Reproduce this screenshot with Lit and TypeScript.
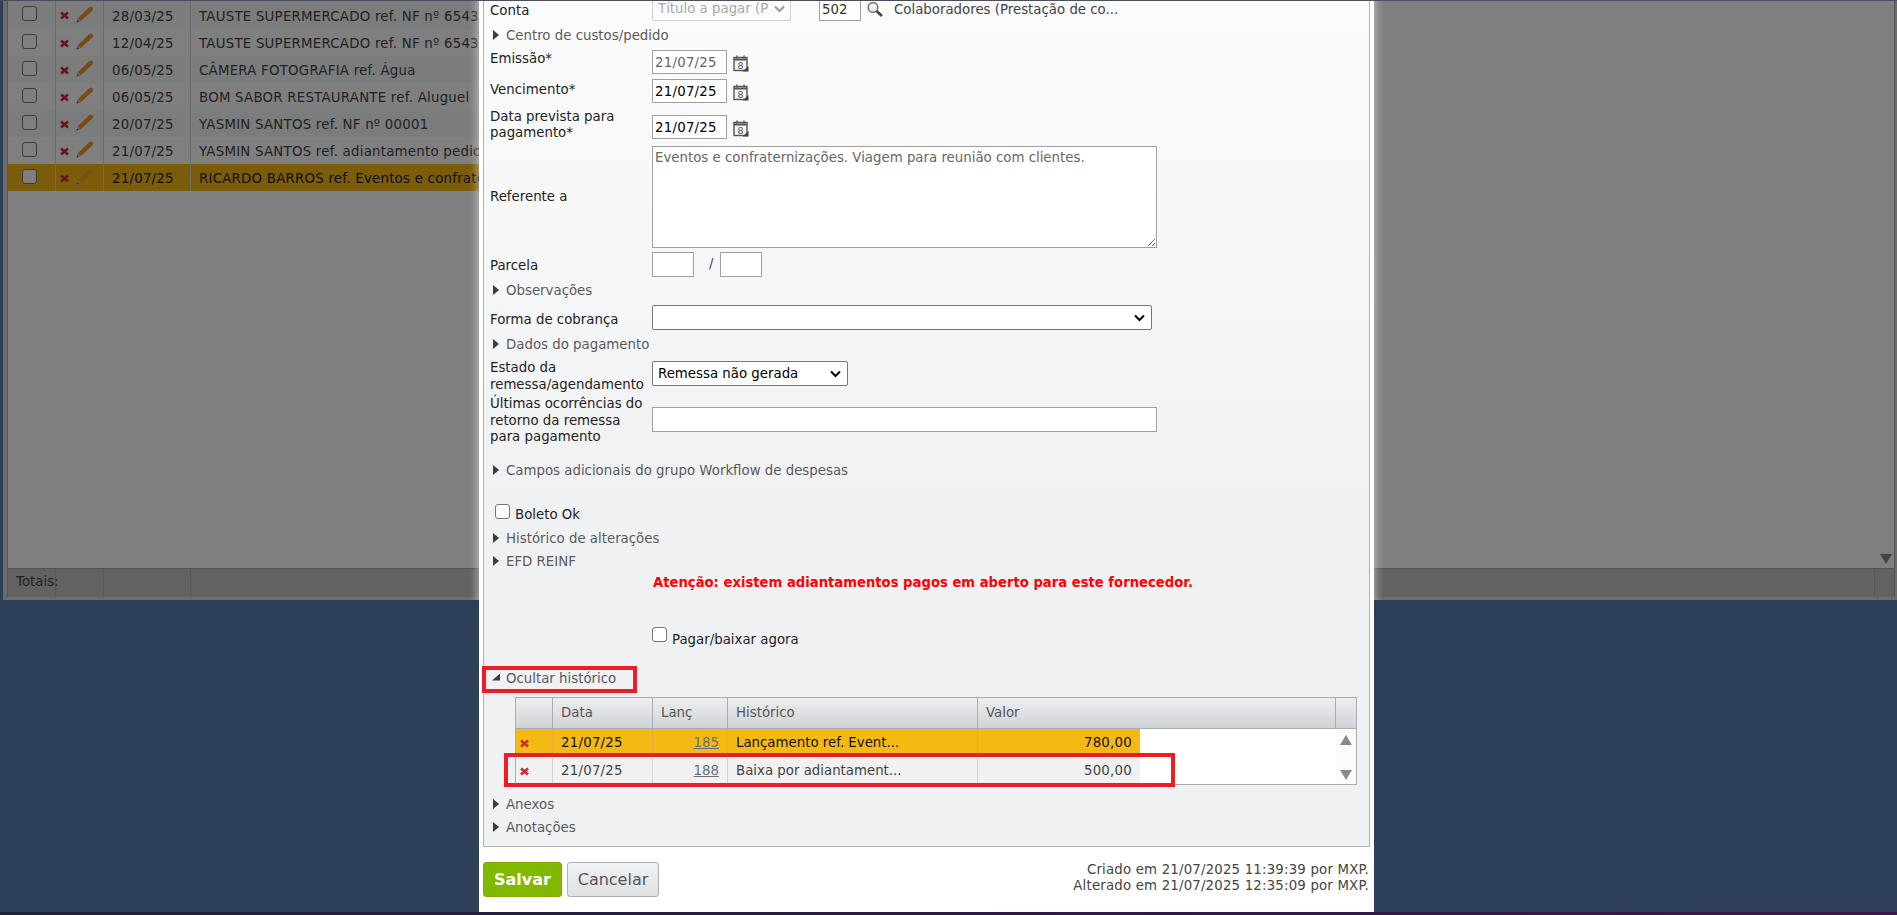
import { LitElement, html, css, svg } from "lit";
import { customElement } from "lit/decorators.js";

const ROWS = [
  ["28/03/25", "TAUSTE SUPERMERCADO ref. NF nº 6543"],
  ["12/04/25", "TAUSTE SUPERMERCADO ref. NF nº 6543"],
  ["06/05/25", "CÂMERA FOTOGRAFIA ref. Água"],
  ["06/05/25", "BOM SABOR RESTAURANTE ref. Aluguel"],
  ["20/07/25", "YASMIN SANTOS ref. NF nº 00001"],
  ["21/07/25", "YASMIN SANTOS ref. adiantamento pedido"],
  ["21/07/25", "RICARDO BARROS ref. Eventos e confraternizações"],
];

const xIcon = svg`<svg class="xi" viewBox="0 0 9 9" width="9" height="9"><path d="M1 1.5 L8 7.5 M8 1.5 L1 7.5" stroke="#d42a30" stroke-width="2.6" fill="none"/></svg>`;
const pencil = svg`<svg class="pen" viewBox="0 0 18 17" width="18" height="17"><path d="M0.5 16.5 L2 12 L13.5 1 Q15 0 16.5 1.2 Q17.8 2.8 16.6 4.2 L5 15 Z" fill="#f0962c"/><path d="M0.5 16.5 L2 12 L5 15 Z" fill="#d9c6a8"/><path d="M0.5 16.5 L1.2 14.4 L2.6 15.8 Z" fill="#444"/></svg>`;
const cal = svg`<svg class="cal" viewBox="0 0 16 17" width="16" height="17"><rect x="1" y="2.5" width="13" height="13" fill="#f4f4f4" stroke="#555" stroke-width="1.4"/><path d="M1 4.5 H14" stroke="#555" stroke-width="2"/><path d="M4 0.5 V3.5 M11 0.5 V3.5" stroke="#555" stroke-width="1.4"/><path d="M15.5 11 V16.5 H9.5 Z" fill="#444"/><text x="7.5" y="14" text-anchor="middle" font-family="DejaVu Sans" font-size="9.5" fill="#555">8</text></svg>`;
const lens = svg`<svg viewBox="0 0 16 15" width="16" height="15"><circle cx="6" cy="5.5" r="4.8" fill="#eef2f4" stroke="#777" stroke-width="1.6"/><path d="M9.5 9 L15 14" stroke="#444" stroke-width="2.6"/></svg>`;

@customElement("app-root")
export class AppRoot extends LitElement {
  static styles = css`
    :host {
      display: flex;
      flex-direction: column;
      position: relative;
      width: 1897px;
      height: 915px;
      overflow: hidden;
      background: #2e4059;
      font-family: "DejaVu Sans", Verdana, sans-serif;
      font-size: 13.33px;
      line-height: 16px;
      color: #222;
    }
    * { box-sizing: border-box; }
    .topline { height: 1px; background: #4b4f5b; flex: none; position: relative; z-index: 5; }
    .strip {
      position: absolute; left: 0; right: 0; bottom: 0; height: 3px;
      background: linear-gradient(90deg, #1d2238, #2c1c40 50%, #3a1a48);
      z-index: 5;
    }
    .sp { letter-spacing: .24px; }

    /* background list */
    .panel {
      position: relative; flex: none;
      margin-left: 3px; height: 599px;
      padding: 0 2px 3px 4px;
      background: #d8d8d8;
      overflow: hidden;
      display: flex;
    }
    .inner {
      flex: 1; display: flex; flex-direction: column; position: relative;
      background: #fff;
      border-left: 1px solid #a8a8a8;
      border-right: 1px solid #a8a8a8;
    }
    .list { flex: 1; width: 472px; overflow: hidden; }
    .lrow {
      display: grid; grid-template-columns: 48px 48px 87px 1fr;
      height: 27px; white-space: nowrap; color: #444;
      background: #fff;
      letter-spacing: .24px;
    }
    .lrow:first-child { height: 28px; }
    .lrow:nth-child(odd) { background: #f6f9f8; }
    .lrow.sel { background: #f5b914; color: #222; }
    .lrow > div { border-right: 1px solid #d6d6d6; display: flex; align-items: center; padding-top: 3px; overflow: hidden; }
    .lrow > div:last-child { border-right: none; }
    .lrow .c1 { padding: 0 0 3px 14px; }
    .lrow .c2 { padding-left: 4px; gap: 7px; }
    .lrow .c2 .xi { margin-top: -2px; }
    .lrow .c2 .pen { margin-top: -5px; }
    .lrow.sel .pen { opacity: .7; }
    .lrow .c3 { padding-left: 8px; }
    .lrow .c4 { padding-left: 8px; }
    .xi { flex: none; }
    .pen { flex: none; }
    input[type="checkbox"] {
      appearance: none; margin: 0; width: 15px; height: 15px; flex: none;
      background: #fff; border: 1.5px solid #767676; border-radius: 3px;
    }
    .totals {
      flex: none; height: 29px; display: grid;
      grid-template-columns: 48px 48px 87px 1fr 19px;
      background: #c4c4c4; color: #444;
      border-top: 1px solid #a4a4a4;
    }
    .totals > div { border-right: 1px solid #b0b0b0; padding: 5px 0 0 8px; white-space: nowrap; }
    .totals > div:last-child { border-right: none; }
    .scrollarrow {
      position: absolute; right: 2px; top: 553px;
      width: 0; height: 0;
      border-left: 6.5px solid transparent; border-right: 6.5px solid transparent;
      border-top: 10px solid #888;
    }
    .veil { position: absolute; inset: 0; background: rgba(0,0,0,.5); }
    .glow {
      position: absolute; left: 476px; top: -20px; width: 895px; height: 700px;
      box-shadow: 0 0 9px 1px rgba(255,255,255,.55);
    }

    /* modal */
    .modal {
      position: absolute; left: 479px; top: 1px; width: 895px; height: 911px;
      background: #fff; padding: 0 4px; overflow: hidden; z-index: 3;
      display: flex; flex-direction: column;
    }
    .box {
      flex: none; height: 846px; width: 887px;
      border: 1px solid #b0b2b8; border-top: none;
      background: linear-gradient(180deg, #fbfbfb 0%, #f6f7f8 30%, #f0f1f3 60%, #f0f1f3 100%);
      padding-left: 6px;
      display: flex; flex-direction: column;
    }
    .row { display: flex; flex: none; }
    .lab { width: 162px; flex: none; }
    .ctl { display: flex; align-items: flex-start; }
    .exp {
      flex: none; height: 24px; display: flex; align-items: center; gap: 7px;
      color: #5a5a5a; padding: 1px 0 0 3px;
    }
    .tri {
      width: 0; height: 0; flex: none; margin-top: -2px;
      border-top: 5px solid transparent; border-bottom: 5px solid transparent;
      border-left: 6px solid #3c3c3c;
    }
    .tri.open {
      border: none; width: 8px; height: 7px; margin: -3px -1px 0 -1px;
      background: #3c3c3c; clip-path: polygon(100% 0, 100% 100%, 0 100%);
    }
    input[type="text"], textarea {
      font: inherit; margin: 0; padding: 0 2px; background: #fff; color: #000;
      border: 1px solid #a0a0a0; border-radius: 0; outline: none; display: block;
    }
    input[type="text"].date { width: 75px; height: 24px; letter-spacing: .24px; }
    input[type="text"].dis, textarea { color: #666; }
    select {
      font: inherit; margin: 0; height: 25px; color: #000;
      appearance: none;
      background: #fff url("data:image/svg+xml,%3Csvg xmlns='http://www.w3.org/2000/svg' width='11' height='8'%3E%3Cpath d='M1 1.5 L5.5 6 L10 1.5' fill='none' stroke='%23000' stroke-width='2'/%3E%3C/svg%3E") no-repeat right 6px center;
      border: 1px solid #767676; border-radius: 2px; padding: 0 22px 0 5px; display: block;
    }
    select:disabled {
      color: #aaa; border-color: #d0d0d0; opacity: 1;
      background: #fbfbfb url("data:image/svg+xml,%3Csvg xmlns='http://www.w3.org/2000/svg' width='11' height='8'%3E%3Cpath d='M1 1.5 L5.5 6 L10 1.5' fill='none' stroke='%23999' stroke-width='2'/%3E%3C/svg%3E") no-repeat right 5px center;
    }
    .cal { margin: 5px 0 0 6px; flex: none; }

    .r-conta { height: 20px; }
    .r-conta .lab { padding-top: 2px; }
    .r-conta .ctl { margin-top: -4px; }
    .r-conta select { width: 139px; height: 24px; }
    input[type="text"].num { width: 42px; height: 24px; margin-left: 28px; color: #333; }
    .lensw { margin: 5px 0 0 6px; width: 16px; flex: none; }
    .colab { margin: 5px 0 0 11px; color: #444; white-space: nowrap; }
    .after-conta { margin-top: 2px; }

    .r-emi { height: 30px; }
    .r-emi .lab { margin-top: 4px; }
    .r-emi .ctl { margin-top: 3px; }
    .r-ven { height: 33px; }
    .r-ven .lab { margin-top: 5px; }
    .r-ven .ctl { margin-top: 2px; }
    .r-pre { height: 34px; }
    .r-pre .lab { margin-top: -1px; }
    .r-pre .ctl { margin-top: 5px; }
    .r-ref { height: 104px; align-items: center; }
    .r-ref .lab { margin-top: 2px; }
    textarea { width: 505px; height: 102px; padding: 3px 2px; margin-top: 1px; resize: both; }
    .r-par { height: 30px; }
    .r-par .lab { margin-top: 10px; }
    .r-par .ctl { margin-top: 4px; }
    input[type="text"].par { width: 42px; height: 25px; }
    .slash { width: 26px; padding-left: 15px; margin-top: 4px; color: #444; }
    .r-for { height: 30px; padding-top: 1px; }
    .r-for .lab { margin-top: 9px; }
    .r-for .ctl { margin-top: 2px; }
    .r-for select { width: 500px; }
    .r-est { height: 36px; }
    .r-est .lab { margin-top: 3px; line-height: 17px; white-space: nowrap; }
    .r-est .ctl { margin-top: 5px; }
    .r-est select { width: 196px; }
    .r-ult { height: 54px; }
    .r-ult .lab { margin-top: 4px; line-height: 16.5px; }
    .r-ult .ctl { margin-top: 15px; }
    input[type="text"].wide { width: 505px; height: 25px; }
    .campos { margin-top: 12px; }
    .r-bol { height: 44px; padding: 22px 0 0 5px; gap: 5px; align-items: flex-start; }
    .r-bol span { margin-top: 3px; }
    .aviso { margin: 2px 0 -1px 163px; color: #f00; font-weight: 700; font-size: 13.2px; height: 16px; white-space: nowrap; }
    .r-pag { margin: 37px 0 0 162px; height: 39px; gap: 5px; align-items: flex-start; }
    .r-pag span { margin-top: 5px; }
    .efd { margin-top: -1px; }

    .hist {
      margin: 7px 0 0 25px; flex: none; width: 842px; height: 88px;
      border: 1px solid #a8acb3; background: #fff; display: flex; flex-direction: column;
    }
    .hhead {
      flex: none; height: 31px; display: grid;
      grid-template-columns: 37px 100px 75px 250px 1fr 20px;
      background: linear-gradient(180deg, #eceef0, #d0d3d6);
      border-bottom: 1px solid #a8acb3; color: #555;
    }
    .hhead > div { border-right: 1px solid #a8acb3; padding: 7px 0 0 8px; }
    .hhead > div:last-child { border-right: none; }
    .hbody { flex: 1; display: flex; min-height: 0; }
    .hrows { width: 624px; flex: none; }
    .hrow {
      height: 28px; display: grid; grid-template-columns: 37px 100px 75px 250px 162px;
      background: #f1f1f1; color: #444;
    }
    .hrow.sel { background: #f5b914; color: #111; }
    .hrow > div { border-right: 1px solid #d4d4d4; padding: 6px 8px 0; white-space: nowrap; }
    .hrow.sel > div { border-right-color: #ddb040; }
    .hrow > div:last-child { border-right: none; }
    .hrow .ico { padding: 7px 0 0 4px; }
    .hrow .rt { text-align: right; }
    .hrow a { color: #6a6f78; text-decoration: underline; }
    .hgap { flex: 1; }
    .hscroll {
      width: 20px; flex: none; background: #fbfbfb;
      display: flex; flex-direction: column; justify-content: space-between; align-items: center;
      padding: 6px 0 4px;
    }
    .up, .down { width: 0; height: 0; border-left: 6.5px solid transparent; border-right: 6.5px solid transparent; }
    .up { border-bottom: 10px solid #8a8a8a; }
    .down { border-top: 10px solid #8a8a8a; }
    .exp.anexos { margin-top: 7px; }
    .exp.anot { margin-top: -1px; }

    .foot { flex: none; display: flex; padding-top: 15px; }
    .btn {
      font-family: inherit; font-size: 16px; height: 35px; border-radius: 3px; margin: 0; padding: 0;
    }
    .save { width: 79px; background: #82b900; border: 1px solid #7cb000; color: #fff; font-weight: 700; }
    .cancel { width: 92px; margin-left: 5px; background: linear-gradient(180deg, #f0f1f2, #dfe1e3); border: 1px solid #aeb2b8; color: #555; }
    .meta { margin-left: auto; text-align: right; color: #444; padding: 0 1px 0 0; letter-spacing: .18px; }

    .mark { position: absolute; border: 4px solid #ee1c25; pointer-events: none; }
    .m1 { left: 3px; top: 665px; width: 155px; height: 27px; }
    .m2 { left: 25px; top: 752px; width: 671px; height: 34px; }
  `;

  private exp(t: string, cls = "") {
    return html`<div class="exp ${cls}"><span class="tri"></span><span>${t}</span></div>`;
  }

  render() {
    return html`
      <div class="topline"></div>
      <div class="panel">
        <div class="inner">
          <div class="list">
            ${ROWS.map((r, i) => html`
              <div class="lrow ${i === 6 ? "sel" : ""}">
                <div class="c1"><input type="checkbox" /></div>
                <div class="c2">${xIcon}${pencil}</div>
                <div class="c3">${r[0]}</div>
                <div class="c4">${r[1]}</div>
              </div>`)}
          </div>
          <div class="totals"><div>Totais:</div><div></div><div></div><div></div><div></div></div>
          <div class="scrollarrow"></div>
        </div>
        <div class="veil"></div>
        <div class="glow"></div>
      </div>

      <div class="modal">
        <div class="box">
          <div class="row r-conta">
            <div class="lab">Conta</div>
            <div class="ctl">
              <select disabled><option>Título a pagar (Prestação de contas)</option></select>
              <input class="num" type="text" value="502" />
              <div class="lensw">${lens}</div>
              <div class="colab">Colaboradores (Prestação de co...</div>
            </div>
          </div>
          ${this.exp("Centro de custos/pedido", "after-conta")}
          <div class="row r-emi">
            <div class="lab">Emissão*</div>
            <div class="ctl"><input class="date dis" type="text" value="21/07/25" />${cal}</div>
          </div>
          <div class="row r-ven">
            <div class="lab">Vencimento*</div>
            <div class="ctl"><input class="date" type="text" value="21/07/25" />${cal}</div>
          </div>
          <div class="row r-pre">
            <div class="lab">Data prevista para pagamento*</div>
            <div class="ctl"><input class="date" type="text" value="21/07/25" />${cal}</div>
          </div>
          <div class="row r-ref">
            <div class="lab">Referente a</div>
            <textarea>Eventos e confraternizações. Viagem para reunião com clientes.</textarea>
          </div>
          <div class="row r-par">
            <div class="lab">Parcela</div>
            <div class="ctl"><input class="par" type="text" /><span class="slash">/</span><input class="par" type="text" /></div>
          </div>
          ${this.exp("Observações")}
          <div class="row r-for">
            <div class="lab">Forma de cobrança</div>
            <div class="ctl"><select><option></option></select></div>
          </div>
          ${this.exp("Dados do pagamento")}
          <div class="row r-est">
            <div class="lab">Estado da<br />remessa/agendamento</div>
            <div class="ctl"><select><option>Remessa não gerada</option></select></div>
          </div>
          <div class="row r-ult">
            <div class="lab">Últimas ocorrências do retorno da remessa para pagamento</div>
            <div class="ctl"><input class="wide" type="text" /></div>
          </div>
          ${this.exp("Campos adicionais do grupo Workflow de despesas", "campos")}
          <div class="row r-bol"><input type="checkbox" /><span>Boleto Ok</span></div>
          ${this.exp("Histórico de alterações")}
          ${this.exp("EFD REINF", "efd")}
          <div class="aviso">Atenção: existem adiantamentos pagos em aberto para este fornecedor.</div>
          <div class="row r-pag"><input type="checkbox" /><span>Pagar/baixar agora</span></div>
          <div class="exp"><span class="tri open"></span><span>Ocultar histórico</span></div>
          <div class="hist">
            <div class="hhead">
              <div></div><div>Data</div><div>Lanç</div><div>Histórico</div><div>Valor</div><div></div>
            </div>
            <div class="hbody">
              <div class="hrows">
                <div class="hrow sel">
                  <div class="ico">${xIcon}</div><div class="sp">21/07/25</div><div class="rt"><a>185</a></div><div>Lançamento ref. Event...</div><div class="rt sp">780,00</div>
                </div>
                <div class="hrow">
                  <div class="ico">${xIcon}</div><div class="sp">21/07/25</div><div class="rt"><a>188</a></div><div>Baixa por adiantament...</div><div class="rt sp">500,00</div>
                </div>
              </div>
              <div class="hgap"></div>
              <div class="hscroll"><span class="up"></span><span class="down"></span></div>
            </div>
          </div>
          ${this.exp("Anexos", "anexos")}
          ${this.exp("Anotações", "anot")}
        </div>
        <div class="foot">
          <button class="btn save">Salvar</button>
          <button class="btn cancel">Cancelar</button>
          <div class="meta">Criado em 21/07/2025 11:39:39 por MXP.<br />Alterado em 21/07/2025 12:35:09 por MXP.</div>
        </div>
        <div class="mark m1"></div>
        <div class="mark m2"></div>
      </div>
      <div class="strip"></div>
    `;
  }
}
